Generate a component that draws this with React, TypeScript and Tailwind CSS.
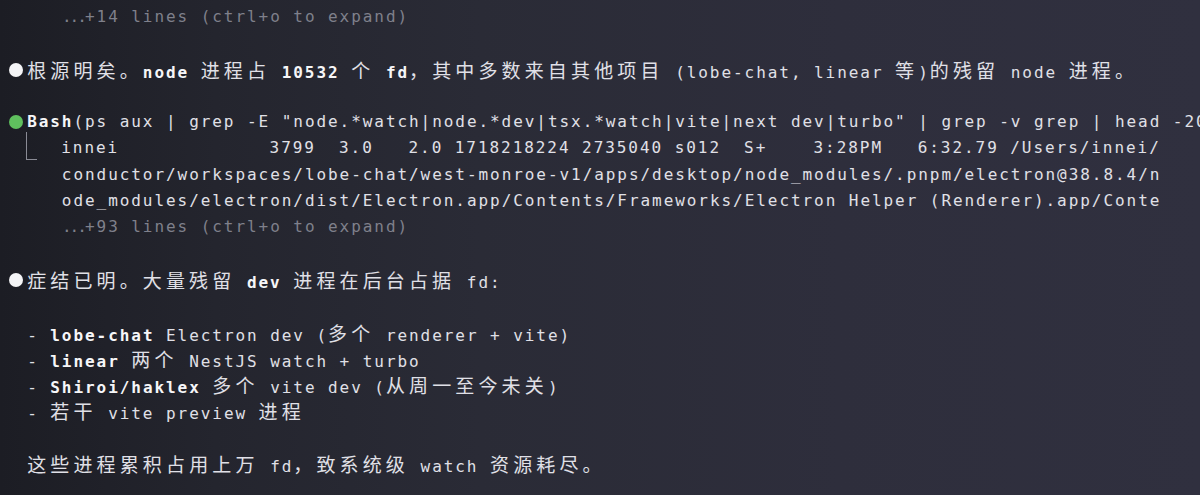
import React from "react";

const CJK = /([\u2E80-\u9FFF\uFF00-\uFFEF\u3000-\u303F]+)/;

function R({ t, b, g }: { t: string; b?: boolean; g?: boolean }) {
  const parts = t.split(CJK).filter((p) => p.length > 0);
  return (
    <span className={b ? "font-bold text-[#f6f6f8]" : g ? "text-[#7f808b]" : ""}>
      {parts.map((p, i) =>
        CJK.test(p) ? (
          <span
            key={i}
            className="font-['Noto_Sans_CJK_SC',sans-serif] text-[19px] tracking-[4.14px] font-normal"
          >
            {p}
          </span>
        ) : (
          <span key={i}>{p}</span>
        )
      )}
    </span>
  );
}

function Dot({ green }: { green?: boolean }) {
  return (
    <span className="inline-flex w-[23.14px] justify-center align-top h-[26.3px] items-center">
      <span
        className={
          green
            ? "block w-[14px] h-[14px] rounded-full bg-[#5fc05e]"
            : "block w-[14px] h-[14px] rounded-full bg-[#f4f4f6]"
        }
      />
    </span>
  );
}

function Ellipsis() {
  return (
    <span className="inline-block w-[23.14px] tracking-[-1.9px] text-[#7f808b]">...</span>
  );
}

function Corner() {
  return (
    <span className="inline-block w-[11px] h-[28px] align-top -mt-[3px] -ml-[1px] mr-[1px] border-l-[1.5px] border-b-[1.5px] border-[#8a8b95]" />
  );
}

function Row({ children }: { children?: React.ReactNode }) {
  return <div className="h-[26.3px] whitespace-pre">{children ?? "\u00a0"}</div>;
}

export default function App() {
  return (
    <div className="w-[1200px] h-[495px] overflow-hidden bg-[linear-gradient(90deg,#1c1d24_0%,#24252e_18%,#2a2b36_40%,#2e2e3c_70%,#30303f_100%)]">
      <div className="pt-[4px] pl-[4px] font-['DejaVu_Sans_Mono',monospace] text-[16px] leading-[26.3px] tracking-[1.94px] text-[#e0e0e7]">
        <Row>
          <R t="     " g />
          <Ellipsis />
          <R t="+14 lines (ctrl+o to expand)" g />
        </Row>
        <Row />
        <Row>
          <Dot />
          <R t="根源明矣。" />
          <R t="node" b />
          <R t=" 进程占 " />
          <R t="10532" b />
          <R t=" 个 " />
          <R t="fd" b />
          <R t="，其中多数来自其他项目 (lobe-chat, linear 等)的残留 node 进程。" />
        </Row>
        <Row />
        <Row>
          <Dot green />
          <R t="Bash" b />
          <R t={'(ps aux | grep -E "node.*watch|node.*dev|tsx.*watch|vite|next dev|turbo" | grep -v grep | head -20)'} />
        </Row>
        <Row>
          <R t="  " />
          <Corner />
          <R t="  innei             3799  3.0   2.0 1718218224 2735040 s012  S+    3:28PM   6:32.79 /Users/innei/" />
        </Row>
        <Row>
          <R t="     conductor/workspaces/lobe-chat/west-monroe-v1/apps/desktop/node_modules/.pnpm/electron@38.8.4/n" />
        </Row>
        <Row>
          <R t="     ode_modules/electron/dist/Electron.app/Contents/Frameworks/Electron Helper (Renderer).app/Conte" />
        </Row>
        <Row>
          <R t="     " g />
          <Ellipsis />
          <R t="+93 lines (ctrl+o to expand)" g />
        </Row>
        <Row />
        <Row>
          <Dot />
          <R t="症结已明。大量残留 " />
          <R t="dev" b />
          <R t=" 进程在后台占据 fd:" />
        </Row>
        <Row />
        <Row>
          <R t="  - " />
          <R t="lobe-chat" b />
          <R t=" Electron dev (多个 renderer + vite)" />
        </Row>
        <Row>
          <R t="  - " />
          <R t="linear" b />
          <R t=" 两个 NestJS watch + turbo" />
        </Row>
        <Row>
          <R t="  - " />
          <R t="Shiroi/haklex" b />
          <R t=" 多个 vite dev (从周一至今未关)" />
        </Row>
        <Row>
          <R t="  - 若干 vite preview 进程" />
        </Row>
        <Row />
        <Row>
          <R t="  这些进程累积占用上万 fd，致系统级 watch 资源耗尽。" />
        </Row>
      </div>
    </div>
  );
}
